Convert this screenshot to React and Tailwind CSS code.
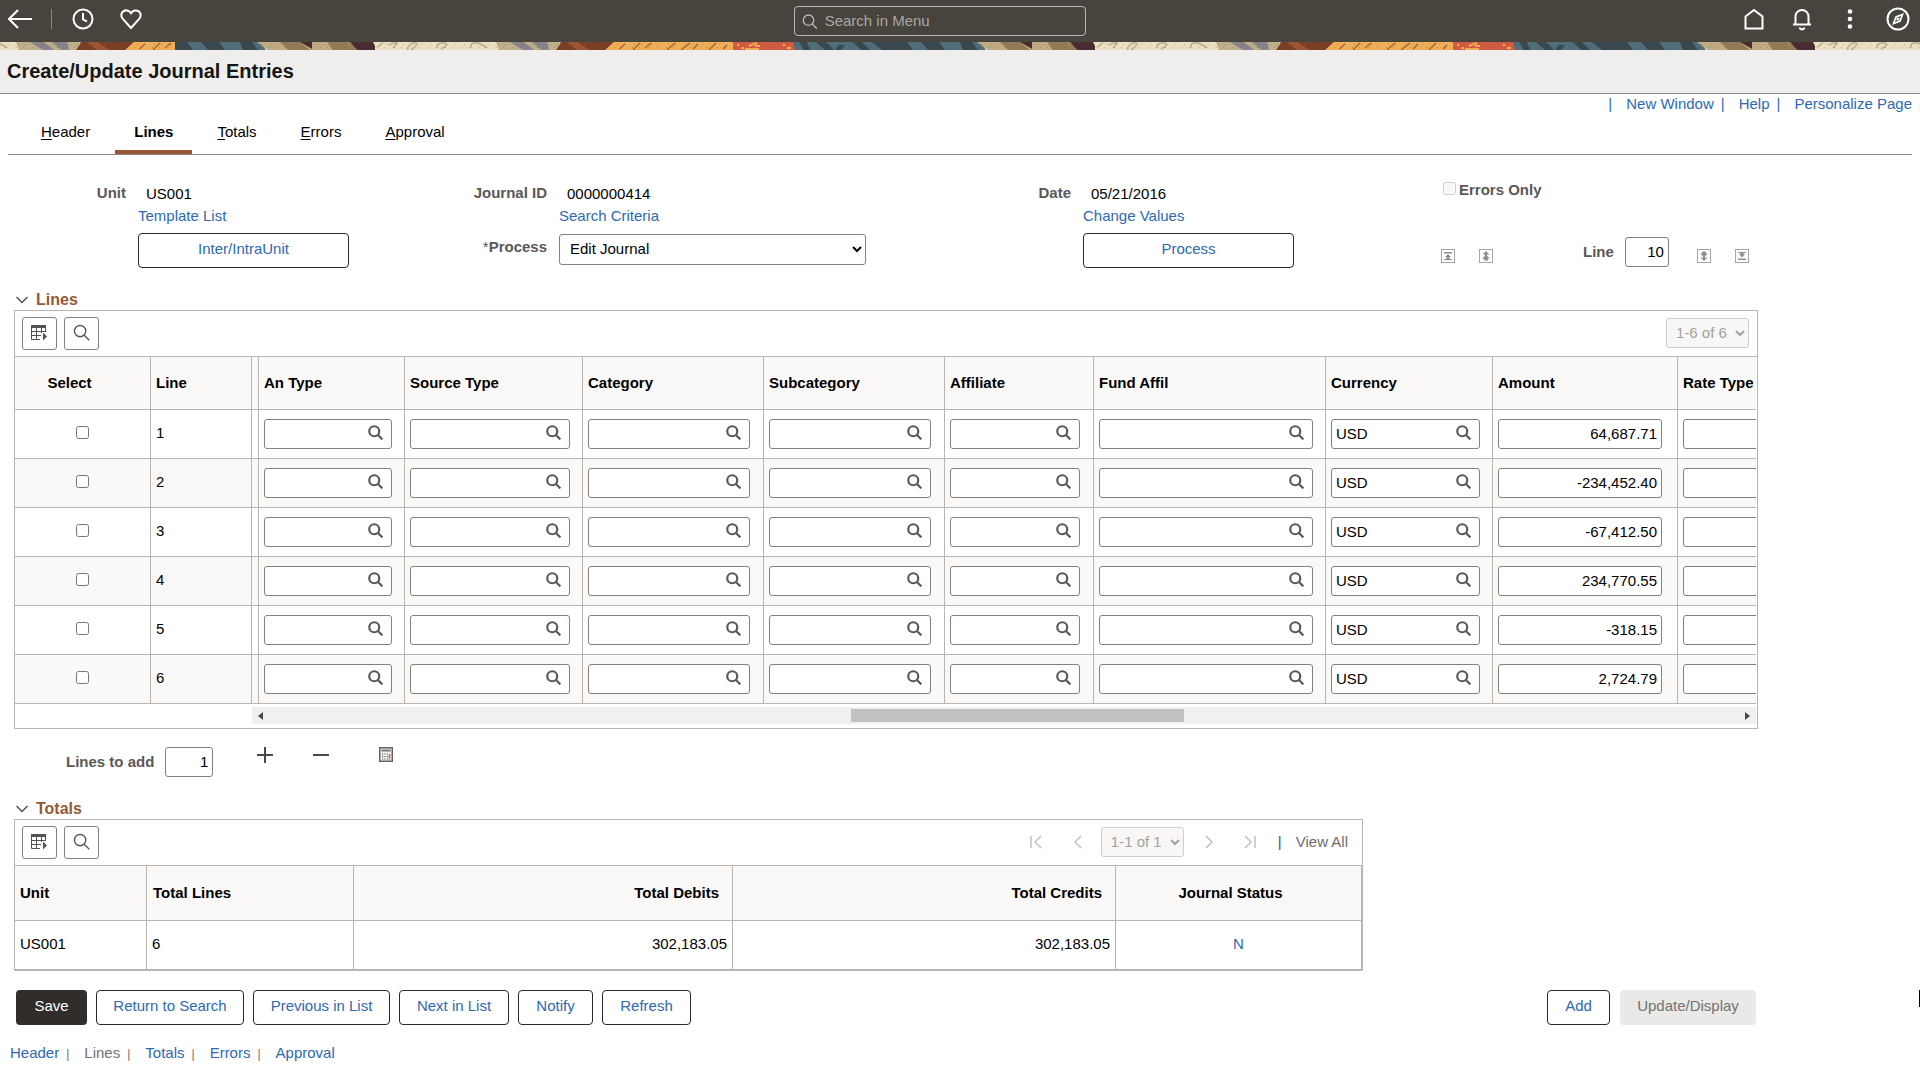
const columns = [
  { name: "An Type", width: "w-[146px]", field: "w-32", lookup: true },
  { name: "Source Type", width: "w-[178px]", field: "w-40", lookup: true },
  { name: "Category", width: "w-[181px]", field: "w-[162px]", lookup: true },
  { name: "Subcategory", width: "w-[181px]", field: "w-[162px]", lookup: true },
  { name: "Affiliate", width: "w-[149px]", field: "w-[130px]", lookup: true },
  { name: "Fund Affil", width: "w-[232px]", field: "w-[214px]", lookup: true },
  { name: "Currency", width: "w-[167px]", field: "w-[149px]", lookup: true },
  { name: "Amount", width: "w-[185px]", field: "w-[164px]" },
  { name: "Rate Type", width: "", field: "w-40", last: true },
];

const rows = [
  { line: 1, Currency: "USD", Amount: "64,687.71" },
  { line: 2, Currency: "USD", Amount: "-234,452.40" },
  { line: 3, Currency: "USD", Amount: "-67,412.50" },
  { line: 4, Currency: "USD", Amount: "234,770.55" },
  { line: 5, Currency: "USD", Amount: "-318.15" },
  { line: 6, Currency: "USD", Amount: "2,724.79" },
];

const tabs = ["Header", "Lines", "Totals", "Errors", "Approval"];

function Stroke({ size = 24, width = 2, className = "", children }) {
  return (
    <svg
      width={size}
      height={size}
      viewBox="0 0 24 24"
      fill="none"
      stroke="currentColor"
      strokeWidth={width}
      className={className}
      aria-hidden="true"
    >
      {children}
    </svg>
  );
}

function SearchIcon({ size = 16, width = 2 }) {
  return (
    <Stroke size={size} width={width}>
      <circle cx="10" cy="10" r="8" />
      <path d="M15.5 15.5 23 23" />
    </Stroke>
  );
}

function TopBar() {
  return (
    <header className="flex h-[42px] items-center bg-[#47433d] text-white">
      <div className="flex flex-1 items-center pb-1 pl-2">
        <button aria-label="Back">
          <Stroke>
            <path d="M24 12H1M10 3 1 12l9 9" />
          </Stroke>
        </button>
        <span className="mx-[19px] h-5 w-px bg-[#8b8782]" />
        <button aria-label="Recently visited">
          <Stroke>
            <circle cx="12" cy="12" r="9.5" />
            <path d="M12 6v6.5l4 2" />
          </Stroke>
        </button>
        <button aria-label="Favorites" className="ml-6">
          <Stroke>
            <path d="M12 21 3.6 11.6C1.6 9.2 2 6 4.2 4.4 6.6 2.6 10 3.2 12 6.2c2-3 5.4-3.6 7.8-1.8 2.2 1.6 2.6 4.8.6 7.2Z" />
          </Stroke>
        </button>
      </div>

      <label className="flex h-[30px] w-[292px] items-center gap-[7px] rounded border border-[#bcb9b5] pl-[7px] text-[#bcb9b5]">
        <SearchIcon size={17} />
        <input
          type="text"
          aria-label="Search in Menu"
          placeholder="Search in Menu"
          className="w-full bg-transparent text-[15px] outline-none placeholder:text-[#aaa7a3]"
        />
      </label>

      <div className="flex flex-1 items-center justify-end gap-6 pr-2.5 pb-1 pl-[38px]">
        <button aria-label="Home">
          <Stroke>
            <path d="M3.5 21.5v-12L12 3l8.5 6.5v12Z" />
          </Stroke>
        </button>
        <button aria-label="Notifications">
          <Stroke>
            <path d="M3 17.5h18M5.5 17.5v-8a6.5 6.5 0 0 1 13 0v8M9.5 20.500a2.600 2.600 0 0 0 5 0" />
          </Stroke>
        </button>
        <button aria-label="Actions">
          <svg width="24" height="24" fill="currentColor" aria-hidden="true">
            <circle cx="12" cy="4.500" r="2.300" />
            <circle cx="12" cy="12" r="2.300" />
            <circle cx="12" cy="19.500" r="2.300" />
          </svg>
        </button>
        <button aria-label="NavBar">
          <Stroke>
            <circle cx="12" cy="12" r="10.5" />
            <path d="m16.500 7.500-2.500 6.500-6.500 2.500 2.500-6.500Z" strokeWidth="1.700" />
            <circle cx="12" cy="12" r=".6" />
          </Stroke>
        </button>
      </div>
    </header>
  );
}

// Woven banner under the top bar; one tile is 720px wide.
function BannerPiece({ id, shift, className }) {
  return (
    <svg height="8" className={className} aria-hidden="true">
      <defs>
        <pattern
          id={id}
          width="720"
          height="8"
          patternUnits="userSpaceOnUse"
          patternTransform={`translate(${shift} 0)`}
        >
          <rect width="720" height="8" fill="#e9dfc3" />
          <path
            d="M2 5l6-4M14 3q6-3 8-2l-4 5M34 8q-4-1 2-6 4-3 6 0-2 4-6 6M62 6q0-6 8-5 4 2-4 6M96 6q-1-6 7-5 5 2 9 5"
            fill="none"
            stroke="#c0ae88"
            strokeWidth="1.500"
          />
          <path d="M121 0h64l-4 8h-57Z" fill="#bfae8a" />
          <path d="M135 0h14l10 8h-11ZM157 0h15l2 8h-8Z" fill="#86838a" />
          <path d="M186 0h54l-9 8h-50Z" fill="#7b3f27" />
          <path d="M192 0h11l11 8h-12Z" fill="#9b5634" />
          <path d="M239 0h122v8H230Z" fill="#edaf55" />
          <path
            d="M244 7l6-5M258 8l7-7M270 6l6-5M292 8l8-7M306 8l9-7M318 7l5-5M334 8l7-7M348 7l4-4"
            stroke="#a5673a"
            strokeWidth="1.500"
          />
          <path d="M358 0h60l5 8h-65Z" fill="#d15c41" />
          <path
            d="M362 3h2M366 6h3M374 4l8-3M370 7h14M380 4h5M408 3h2M412 6h4"
            fill="none"
            stroke="#edaf55"
            strokeWidth="2"
          />
          <path d="M418 0h187l6 8H420Z" fill="#4f6e7a" />
          <path
            d="M424 0h8l3 8h-6ZM441 0h10l8 8h-9ZM464 3h6l-4 5h-6ZM478 0h9l8 8h-9ZM497 0h35l6 8h-31ZM546 0h18l6 8h-17ZM585 0h12l6 8h-15Z"
            fill="#39474f"
          />
          <path d="M602 0h62l14 8h-65Z" fill="#bfaa84" />
          <path d="M625 0h20l10 8h-22ZM672 0h20l5 8h-20Z" fill="#927b56" />
          <path d="M645 0h12v7Z" fill="#4c2b2e" />
          <path d="M657 0h15l5 8h-16Z" fill="#bfaa84" />
          <path d="M692 0h3l7 8h-5Z" fill="#927b56" />
          <path d="M695 0h23l4 8h-20Z" fill="#4c2b2e" />
          <path d="M4 2.500h716M2 5.500h716" stroke="#3a2a20" strokeOpacity=".3" strokeWidth=".8" strokeDasharray="1 6 1 9" />
        </pattern>
      </defs>
      <rect width="100%" height="8" fill={`url(#${id})`} />
    </svg>
  );
}

function OutlineButton({ children, className = "" }) {
  return (
    <button
      className={`h-[35px] rounded border border-[#2b2826] bg-white pb-[3px] text-center text-[#2f69b1] ${className}`}
    >
      {children}
    </button>
  );
}

function LookupField({ label, value = "", width }) {
  return (
    <div className={`relative ${width}`}>
      <input
        type="text"
        aria-label={label}
        defaultValue={value}
        className="block h-[30px] w-full rounded-[3px] border border-[#85807b] bg-white pr-7 pb-0.5 pl-1"
      />
      <button
        aria-label={`Look up ${label}`}
        className="absolute top-1.5 right-[9px] text-[#5b5857]"
      >
        <SearchIcon size={15} width={3.5} />
      </button>
    </div>
  );
}

function NavIcon({ label, children }) {
  return (
    <button aria-label={label} className="mb-1">
      <svg width="14" height="14" aria-hidden="true" fill="#8f8f8f">
        <rect x=".5" y=".5" width="13" height="13" fill="#fff" stroke="#a5a5a5" />
        {children}
      </svg>
    </button>
  );
}

function GridTools({ children }) {
  return (
    <div className="flex h-[46px] items-center border-b border-[#bbb5b1] pl-[7px]">
      <button
        aria-label="Grid action menu"
        className="flex h-[33px] w-[35px] items-center justify-center rounded-[3px] border border-[#85807b] text-[#55524f]"
      >
        <svg width="17" height="16" aria-hidden="true" className="mb-0.5">
          <path d="M0 0h15v3H0Z" fill="currentColor" />
          <path
            d="M.5 3v11.500H9M5.500 3v12M10.500 3v5M14.500 3v4M0 6.500h15M0 10.500h10"
            fill="none"
            stroke="currentColor"
          />
          <path d="M12 7.500v8l4-4Z" fill="currentColor" />
        </svg>
      </button>
      <button
        aria-label="Find"
        className="ml-[7px] flex h-[33px] w-[35px] items-center justify-center rounded-[3px] border border-[#85807b] pb-0.5 text-[#5b5857]"
      >
        <SearchIcon size={17} width={2} />
      </button>
      {children}
    </div>
  );
}

function RangeSelect({ label, value }) {
  return (
    <select
      aria-label={label}
      disabled
      className="mb-0.5 h-[30px] w-[83px] rounded-[3px] border border-[#d0cecc] bg-[#f8f7f6] pl-[5px] text-[#a3a19f]"
    >
      <option>{value}</option>
    </select>
  );
}

function SectionTitle({ children }) {
  return (
    <h2 className="mt-[22px] ml-4 flex items-center gap-2 text-base leading-5 font-bold text-[#945a38]">
      <svg width="12" height="8" fill="none" stroke="#55524f" strokeWidth="1.500" aria-hidden="true">
        <path d="m.5 1 5.500 5.500L11.500 1" />
      </svg>
      {children}
    </h2>
  );
}

function JournalFields() {
  const label = "text-right leading-5 font-bold text-[#5b5857]";
  const link = "mt-0.5 leading-[18px] text-[#2f69b1]";

  return (
    <section className="flex pt-[26px]">
      <div className="grid shrink-0 grid-cols-[126px_300px_97px_400px_100px_346px] content-start gap-x-3 pt-0.5">
        <span className={label}>Unit</span>
        <span className="pl-2 leading-[22px]">US001</span>
        <span className={label}>Journal ID</span>
        <span className="pl-2 leading-[22px]">0000000414</span>
        <span className={label}>Date</span>
        <span className="pl-2 leading-[22px]">05/21/2016</span>

        <a href="#" className={`col-start-2 justify-self-start ${link}`}>Template List</a>
        <a href="#" className={`col-start-4 justify-self-start ${link}`}>Search Criteria</a>
        <a href="#" className={`col-start-6 justify-self-start ${link}`}>Change Values</a>

        <OutlineButton className="col-start-2 mt-2 w-[211px]">Inter/IntraUnit</OutlineButton>
        <label htmlFor="process" className={`mt-3 ${label}`}>
          <span className="font-normal">*</span>Process
        </label>
        <select
          id="process"
          className="mt-[9px] h-[31px] w-[307px] rounded-[3px] border border-[#85807b] bg-white pb-0.5 pl-1.5"
        >
          <option>Edit Journal</option>
        </select>
        <OutlineButton className="col-start-6 mt-2 w-[211px]">Process</OutlineButton>
      </div>

      <div className="ml-3 shrink-0">
        <label className="ml-0.5 flex items-start gap-[3px] leading-[18px] font-bold text-[#5b5857]">
          <input type="checkbox" disabled className="mt-px size-[13px]" />
          Errors Only
        </label>
        <div className="mt-[38px] flex items-end">
          <NavIcon label="First line">
            <path d="M3 3h8v1.500H3ZM7 5l3 3H8.500v2H11v1H3v-1h2.500V8H4Z" />
          </NavIcon>
          <span className="w-6" />
          <NavIcon label="Previous lines">
            <path d="M7 2l3.500 3.500h-7ZM6 5h2v2H6ZM7 6l4 3.500H3ZM5 9h4v2.500H5Z" />
          </NavIcon>
          <label className="ml-[90px] flex items-center gap-[11px] font-bold text-[#5b5857]">
            Line
            <input
              type="text"
              defaultValue="10"
              className="mr-7 h-[30px] w-11 rounded-[3px] border border-[#85807b] pr-1 pb-0.5 text-right font-normal text-black"
            />
          </label>
          <NavIcon label="Next lines">
            <path d="M5 2.500h4V5H5ZM3 4.500h8L7 8ZM6 7h2v2H6ZM3.500 8.500h7L7 12Z" />
          </NavIcon>
          <span className="w-6" />
          <NavIcon label="Last line">
            <path d="M3 3h8v1H8.500v1H10L7 8.500 4 5h1.500V4H3ZM3 9.500h8V11H3Z" />
          </NavIcon>
        </div>
      </div>
    </section>
  );
}

function LinesGrid() {
  const cell = "border-b border-[#bbb5b1]";

  return (
    <section className="mr-[162px] ml-3.5 border border-[#bbb5b1]">
      <GridTools>
        <div className="mr-2 ml-auto flex">
          <RangeSelect label="Line rows" value="1-6 of 6" />
        </div>
      </GridTools>

      <div className="mr-px overflow-hidden">
        <table className="w-full table-fixed border-separate border-spacing-0 text-left">
          <thead>
            <tr className="h-[53px] bg-[#faf9f8]">
              <th className={`w-[136px] border-r pr-[26px] text-center ${cell}`}>Select</th>
              <th className={`w-[101px] border-r pl-[5px] ${cell}`}>Line</th>
              <th aria-hidden="true" className={`w-[7px] border-r ${cell}`} />
              {columns.map((col) => (
                <th
                  key={col.name}
                  className={`pl-[5px] whitespace-nowrap ${col.width} ${cell} ${col.last ? "" : "border-r"}`}
                >
                  {col.name}
                </th>
              ))}
            </tr>
          </thead>
          <tbody>
            {rows.map((row) => (
              <tr key={row.line} className="h-[49px] even:bg-[#faf9f8]">
                <td className={`border-r ${cell}`}>
                  <input
                    type="checkbox"
                    aria-label={`Select line ${row.line}`}
                    className="mx-auto mb-1 block size-[13px]"
                  />
                </td>
                <td className={`border-r pb-[3px] pl-[5px] ${cell}`}>{row.line}</td>
                <td aria-hidden="true" className={`border-r ${cell}`} />
                {columns.map((col) => (
                  <td
                    key={col.name}
                    className={`overflow-hidden pl-[5px] ${cell} ${col.last ? "" : "border-r"}`}
                  >
                    {col.lookup ? (
                      <LookupField
                        label={`${col.name} ${row.line}`}
                        value={row[col.name]}
                        width={col.field}
                      />
                    ) : (
                      <input
                        type="text"
                        aria-label={`${col.name} ${row.line}`}
                        defaultValue={row[col.name]}
                        className={`block h-[30px] rounded-[3px] border border-[#85807b] bg-white pr-1 pb-0.5 text-right ${col.field}`}
                      />
                    )}
                  </td>
                ))}
              </tr>
            ))}
          </tbody>
        </table>
      </div>

      {/* Horizontal scroll track for the unfrozen columns */}
      <div className="mt-[3px] mr-px mb-1 ml-[237px] flex h-[17px] items-center bg-[#f0f0f0] px-1.5">
        <svg width="5" height="8" fill="#4b4845" aria-hidden="true">
          <path d="M5 0v8L0 4Z" />
        </svg>
        <span className="ml-[588px] h-[13px] w-[333px] bg-[#c1c1c1]" />
        <svg width="5" height="8" fill="#4b4845" aria-hidden="true" className="ml-auto">
          <path d="M0 0v8l5-4Z" />
        </svg>
      </div>
    </section>
  );
}

function AddLines() {
  return (
    <section className="mt-[18px] ml-[66px] flex items-start">
      <label className="flex items-center gap-[11px] font-bold text-[#5b5857]">
        Lines to add
        <input
          type="text"
          defaultValue="1"
          className="h-[30px] w-12 rounded-[3px] border border-[#85807b] pr-1 pb-0.5 text-right font-normal text-black"
        />
      </label>
      <button aria-label="Insert lines" className="ml-11">
        <svg width="16" height="16" stroke="#4b4845" strokeWidth="2" aria-hidden="true">
          <path d="M8 0v16M0 8h16" />
        </svg>
      </button>
      <button aria-label="Delete lines" className="ml-10">
        <svg width="16" height="16" stroke="#4b4845" strokeWidth="2" aria-hidden="true">
          <path d="M0 8h16" />
        </svg>
      </button>
      <button aria-label="Calculate amounts" className="ml-[50px]">
        <svg width="14" height="15" aria-hidden="true">
          <rect x=".75" y=".75" width="12.500" height="13.500" fill="#f2f1f0" stroke="#66625f" strokeWidth="1.500" />
          <path d="M2.500 3.500h9" stroke="#6c7f78" strokeWidth="2" />
          <path d="M3 7h6M3 9.500h6M3 12h6" stroke="#55524f" strokeWidth="1.200" strokeDasharray="1.200 1.200" />
          <path d="M10.500 7v4" stroke="#dd5a45" strokeWidth="1.500" />
          <path d="M10.500 11.500v1" stroke="#55524f" strokeWidth="1.500" />
        </svg>
      </button>
    </section>
  );
}

function PageArrow({ label, d, className = "" }) {
  return (
    <button aria-label={label} disabled className={`mb-0.5 ${className}`}>
      <svg width="12" height="14" fill="none" stroke="#c2c0be" strokeWidth="1.500" aria-hidden="true">
        <path d={d} />
      </svg>
    </button>
  );
}

function TotalsGrid() {
  const cell = "border-r border-b border-[#bbb5b1]";

  return (
    <section className="ml-3.5 w-[1349px] border border-[#bbb5b1]">
      <GridTools>
        <div className="mr-3.5 ml-auto flex items-center">
          <PageArrow label="First row" d="M1 1v12M11 1 5 7l6 6" />
          <PageArrow label="Previous row" d="M9 1 3 7l6 6" className="mr-[17px] ml-[30px]" />
          <RangeSelect label="Total rows" value="1-1 of 1" />
          <PageArrow label="Next row" d="M3 1l6 6-6 6" className="mr-[29px] ml-[19px]" />
          <PageArrow label="Last row" d="M1 1l6 6-6 6M11 1v12" />
          <span className="mr-3.5 mb-0.5 ml-[22px] text-[#55524f]">|</span>
          <a href="#" className="mb-px text-[#6f6c69]">View All</a>
        </div>
      </GridTools>
      <table className="w-full table-fixed border-separate border-spacing-0 text-left">
        <thead>
          <tr className="h-[55px] bg-[#faf9f8]">
            <th className={`w-[132px] pl-[5px] ${cell}`}>Unit</th>
            <th className={`w-[207px] pl-1.5 ${cell}`}>Total Lines</th>
            <th className={`w-[379px] pr-[13px] text-right ${cell}`}>Total Debits</th>
            <th className={`w-[383px] pr-[13px] text-right ${cell}`}>Total Credits</th>
            <th className={`pr-4 text-center ${cell}`}>Journal Status</th>
          </tr>
        </thead>
        <tbody>
          <tr className="h-[49px]">
            <td className={`pb-[3px] pl-[5px] ${cell}`}>US001</td>
            <td className={`pb-[3px] pl-[5px] ${cell}`}>6</td>
            <td className={`pr-[5px] pb-[3px] text-right ${cell}`}>302,183.05</td>
            <td className={`pr-[5px] pb-[3px] text-right ${cell}`}>302,183.05</td>
            <td className={`pb-[3px] text-center ${cell}`}>
              <a href="#" className="text-[#2f69b1]">N</a>
            </td>
          </tr>
        </tbody>
      </table>
    </section>
  );
}

export default function App() {
  return (
    <div className="min-h-screen bg-white font-['Liberation_Sans',Arial,sans-serif] text-[15px] leading-[18px] text-black">
      <TopBar />
      <div className="flex">
        <BannerPiece id="banner-start" shift={-105} className="w-[175px] shrink-0" />
        <BannerPiece id="banner-rest" shift={-520} className="flex-1" />
      </div>

      <div className="flex h-11 items-center border-b border-[#8a8886] bg-[#f0eeec] pb-0.5 pl-[7px]">
        <h1 className="text-xl leading-6 font-bold text-[#161513]">Create/Update Journal Entries</h1>
      </div>

      <div className="flex justify-end pt-px pr-2 text-[#2f69b1]">
        <span className="mr-3.5">|</span>
        <a href="#">New Window</a>
        <span className="mr-3.5 ml-[7px]">|</span>
        <a href="#">Help</a>
        <span className="mr-3.5 ml-[7px]">|</span>
        <a href="#">Personalize Page</a>
      </div>

      <nav className="mx-2 flex gap-1.5 border-b border-[#8a8886] pt-2.5 pl-3.5">
        {tabs.map((tab) => (
          <a
            key={tab}
            href="#"
            className={`border-b-4 px-[19px] pb-[9px] ${
              tab === "Lines" ? "border-[#975735] font-bold" : "border-transparent"
            }`}
          >
            {tab === "Lines" ? (
              tab
            ) : (
              <>
                <span className="underline underline-offset-2">{tab[0]}</span>
                {tab.slice(1)}
              </>
            )}
          </a>
        ))}
      </nav>

      <main>
        <JournalFields />
        <SectionTitle>Lines</SectionTitle>
        <LinesGrid />
        <AddLines />
        <SectionTitle>Totals</SectionTitle>
        <TotalsGrid />

        <div className="mt-[19px] flex">
          <div className="mr-[9px] ml-4 flex flex-1 gap-[9px]">
            <button className="h-[35px] w-[71px] rounded bg-[#312d2a] pb-[3px] text-white">Save</button>
            <OutlineButton className="w-[148px]">Return to Search</OutlineButton>
            <OutlineButton className="w-[137px]">Previous in List</OutlineButton>
            <OutlineButton className="w-[110px]">Next in List</OutlineButton>
            <OutlineButton className="w-[75px]">Notify</OutlineButton>
            <OutlineButton className="w-[89px]">Refresh</OutlineButton>
          </div>
          <OutlineButton className="mr-2.5 w-[63px]">Add</OutlineButton>
          <button disabled className="h-[35px] w-[136px] rounded bg-[#e9e9e7] pb-[3px] text-[#74716e]">
            Update/Display
          </button>
          <span className="ml-[163px] h-[17px] w-px bg-black" />
        </div>
      </main>

      <footer className="mt-[19px] ml-2.5 flex pb-4 text-[#2f69b1]">
        {tabs.map((tab, i) => (
          <span key={tab} className="flex">
            {i > 0 && <span className="mr-[15px] ml-[7px] text-xs leading-5 text-[#6f6c69]">|</span>}
            <a href="#" className={tab === "Lines" ? "text-[#74716e]" : ""}>{tab}</a>
          </span>
        ))}
      </footer>
    </div>
  );
}
